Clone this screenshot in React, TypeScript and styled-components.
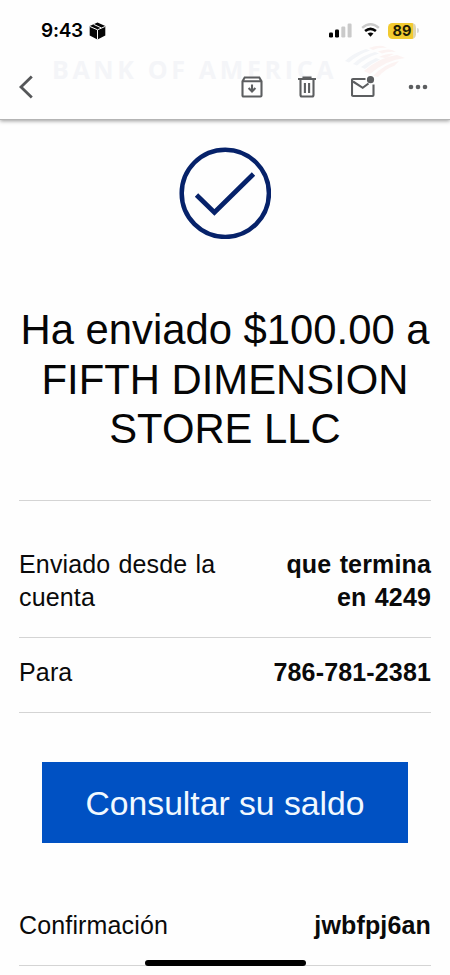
import React from "react";
import styled, { createGlobalStyle } from "styled-components";

const GlobalStyle = createGlobalStyle`
  * { box-sizing: border-box; }
  body {
    margin: 0;
    background: #fefefe;
    font-family: "Liberation Sans", Arial, sans-serif;
    color: #0a0a0a;
  }
`;

const Screen = styled.div`
  position: relative;
  width: 450px;
  height: 975px;
  overflow: hidden;
  background: #fefefe;
  display: flex;
  flex-direction: column;
`;

const Header = styled.header`
  position: relative;
  flex: none;
  height: 120px;
  border-bottom: 1px solid #b4b4b4;
  box-shadow: 0 1px 4px rgba(0, 0, 0, 0.4);
  background: #fefefe;
`;

const StatusBar = styled.div`
  height: 60px;
  display: flex;
  align-items: center;
  justify-content: space-between;
  padding: 1px 31px 0 41px;
`;

const StatusGroup = styled.div<{ $gap: number }>`
  display: flex;
  align-items: center;
  gap: ${(p) => p.$gap}px;
`;

const Clock = styled.span`
  font: 600 19px/24px Inter, sans-serif;
  letter-spacing: -0.25px;
  color: #000;
`;

const Battery = styled.div`
  display: flex;
  align-items: center;
  gap: 1px;
`;

const BatteryBody = styled.span`
  width: 28px;
  height: 16px;
  border-radius: 4.5px;
  background: linear-gradient(90deg, #f2ca30 89%, #dfd5ae 89%);
  color: #211b04;
  font: 700 14.5px/16.5px Inter, sans-serif;
  text-align: center;
`;

const BatteryTip = styled.span`
  width: 2px;
  height: 5px;
  border-radius: 0 2px 2px 0;
  background: #d8d8d8;
`;

const Toolbar = styled.nav`
  position: relative;
  height: 54px;
  display: flex;
  align-items: center;
  justify-content: space-between;
  padding: 0 20px 0 14px;
`;

const Actions = styled.div`
  display: flex;
  gap: 31.5px;
`;

const IconButton = styled.button`
  width: 24px;
  height: 28px;
  padding: 0;
  border: 0;
  background: none;
  display: flex;
  align-items: center;
  justify-content: center;
  svg { flex: none; display: block; }
`;

const Watermark = styled.div`
  position: absolute;
  left: 52px;
  top: 45px;
  display: flex;
  align-items: flex-start;
  gap: 6px;
`;

const WatermarkText = styled.span`
  width: 286px;
  padding-top: 7px;
  font: 700 25px/34px "Open Sans", sans-serif;
  letter-spacing: 3.65px;
  white-space: nowrap;
  color: #f4f5f8;
`;

const Content = styled.main`
  flex: 1;
  display: flex;
  flex-direction: column;
  padding: 27px 19px 0;
`;

const CheckMark = styled.svg`
  align-self: center;
  flex: none;
`;

const Title = styled.h1`
  margin: 66px -10px 0;
  height: 148px;
  font-size: 41.8px;
  font-weight: 400;
  line-height: 49.6px;
  text-align: center;
  color: #060606;
`;

const Details = styled.dl`
  margin: 47px 0 0;
  border-top: 1px solid #d4d4d4;
`;

const Row = styled.div<{ $height: number; $top: number }>`
  display: flex;
  justify-content: space-between;
  height: ${(p) => p.$height}px;
  padding-top: ${(p) => p.$top}px;
  border-bottom: 1px solid #d4d4d4;
  font-size: 25px;
  line-height: 33.3px;
`;

const Label = styled.dt<{ $word?: number }>`
  width: 220px;
  letter-spacing: 0.15px;
  word-spacing: ${(p) => p.$word ?? 0}px;
`;

const Value = styled.dd<{ $word?: number }>`
  margin: 0;
  width: 180px;
  font-weight: 700;
  text-align: right;
  letter-spacing: 0.15px;
  word-spacing: ${(p) => p.$word ?? 0}px;
`;

const BalanceButton = styled.button`
  flex: none;
  align-self: center;
  width: 366px;
  height: 81px;
  margin: 49px 0 42px;
  padding: 0;
  border: 0;
  background: #0051c3;
  color: #f1f9ff;
  font: 33.7px/78px "Liberation Sans", Arial, sans-serif;
`;

const Confirmation = styled.dl`
  margin: 0;
`;

const HomeIndicator = styled.div`
  position: absolute;
  left: 145px;
  bottom: 9px;
  width: 161px;
  height: 6px;
  border-radius: 3px;
  background: #000;
`;

const PackageIcon = () => (
  <svg width="17" height="18" viewBox="0 0 17 18">
    <path d="M8.5.5 16.3 4v9.5l-7.8 4-7.8-4V4z" fill="#050505" />
    <path d="M.7 4.4 8.5 7.8l7.8-3.4M8.5 8v9.5M4.6 2.3l7.6 3.6" fill="none" stroke="#fefefe" strokeWidth="1" />
  </svg>
);

const SignalIcon = () => (
  <svg width="23" height="15" viewBox="0 0 23 15">
    <rect x="0" y="9.5" width="4" height="5" rx="1.2" fill="#050505" />
    <rect x="6" y="6.5" width="4" height="8" rx="1.2" fill="#050505" />
    <rect x="12.3" y="3.5" width="4" height="11" rx="1.2" fill="#cacaca" />
    <rect x="18.6" y=".5" width="4" height="14" rx="1.2" fill="#cacaca" />
  </svg>
);

const WifiIcon = () => (
  <svg width="19" height="14.5" viewBox="0 0 20 15" fill="none">
    <path d="M1.2 5.1Q10-2.6 18.8 5.1" stroke="#cacaca" strokeWidth="2.5" />
    <path d="M4.3 8.4q5.7-4.8 11.4 0" stroke="#050505" strokeWidth="2.7" />
    <path d="M6.9 11q3.1-2.4 6.2 0L10 14.4z" fill="#050505" />
  </svg>
);

const FlagMark = () => (
  <svg width="64" height="34" viewBox="0 0 64 34">
    <path d="M1 16Q11 7 22 4l4 1.5Q15 9 5 17.500zM9 19Q19 10 31 7l4 1.500Q23 12 13 20.500zM17 22Q25 16 32 13l4 1.500Q28 18 21 24z" fill="#f3f5f8" />
    <path d="M25 3q8-3 14-2l4 2q-8-1-14 2zM34 6.500q9-3 14-1.500l4 2q-8-1-14 1.500zM20 26Q36 12 53 10l8 3Q42 15 26 29zM35 12q9-4 15-3l-9 4zM29 31Q40 19 55 16l-5 5q-9 3-16 11z" fill="#fcf3f2" />
  </svg>
);

const BackIcon = () => (
  <svg width="20" height="24" viewBox="0 0 20 24">
    <path d="M15.8 1.5 5 12l10.8 10.5" fill="none" stroke="#555759" strokeWidth="2.8" />
  </svg>
);

const ArchiveIcon = () => (
  <svg width="22" height="22" viewBox="0 0 22 22" fill="none" stroke="#5c5e60" strokeWidth="2.1">
    <path d="M1.5 5.2 3.7 1.5h14.6l2.2 3.7v14.3q0 1-1 1h-17q-1 0-1-1zM1.5 5.2h19" />
    <path d="M11 8.6v7M7.6 12.1l3.4 3.4 3.400-3.400" />
  </svg>
);

const TrashIcon = () => (
  <svg width="20" height="22" viewBox="0 0 20 22" fill="none" stroke="#5c5e60" strokeWidth="2.1">
    <path d="M1 3h18M6.500 2.100V1.500h7v.6M3.500 3.500V19q0 1.500 1.500 1.500h10q1.500 0 1.500-1.500V3.500M7.900 7v10M12.100 7v10" />
  </svg>
);

const MailIcon = () => (
  <svg width="24" height="22" viewBox="0 0 24 22" fill="none" stroke="#5c5e60" strokeWidth="2.1">
    <path d="M14.500 3H2q-1 0-1 1v15q0 1 1 1h19.500q1 0 1-1V8.500M2 5.500l9.700 6.300 5.800-4.300" />
    <circle cx="19.500" cy="3.700" r="3.600" fill="#5c5e60" stroke="none" />
  </svg>
);

const MoreIcon = () => (
  <svg width="20" height="6" viewBox="0 0 20 6" fill="#5c5e60">
    <circle cx="3" cy="3" r="2.3" />
    <circle cx="10" cy="3" r="2.3" />
    <circle cx="17" cy="3" r="2.3" />
  </svg>
);

export default function App() {
  return (
    <>
      <GlobalStyle />
      <Screen>
        <Header>
          <Watermark>
            <WatermarkText>BANK OF AMERICA</WatermarkText>
            <FlagMark />
          </Watermark>
          <StatusBar>
            <StatusGroup $gap={6}>
              <Clock>9:43</Clock>
              <PackageIcon />
            </StatusGroup>
            <StatusGroup $gap={8.5}>
              <SignalIcon />
              <WifiIcon />
              <Battery>
                <BatteryBody>89</BatteryBody>
                <BatteryTip />
              </Battery>
            </StatusGroup>
          </StatusBar>
          <Toolbar>
            <IconButton aria-label="Atrás"><BackIcon /></IconButton>
            <Actions>
              <IconButton aria-label="Archivar"><ArchiveIcon /></IconButton>
              <IconButton aria-label="Eliminar"><TrashIcon /></IconButton>
              <IconButton aria-label="Marcar como no leído"><MailIcon /></IconButton>
              <IconButton aria-label="Más"><MoreIcon /></IconButton>
            </Actions>
          </Toolbar>
        </Header>
        <Content>
          <CheckMark width="92" height="92" viewBox="0 0 92 92" fill="none" stroke="#06226a">
            <circle cx="46.3" cy="46.3" r="43.6" strokeWidth="4.5" />
            <path d="M17.5 48 35.4 65.500 74.500 27" strokeWidth="4.8" />
          </CheckMark>
          <Title>
            Ha enviado $100.00 a<br />FIFTH DIMENSION<br />STORE LLC
          </Title>
          <Details>
            <Row $height={137} $top={47}>
              <Label $word={1}>Enviado desde la<br />cuenta</Label>
              <Value $word={1.2}>que termina<br />en 4249</Value>
            </Row>
            <Row $height={75} $top={18}>
              <Label>Para</Label>
              <Value>786-781-2381</Value>
            </Row>
          </Details>
          <BalanceButton>Consultar su saldo</BalanceButton>
          <Confirmation>
            <Row $height={81} $top={24}>
              <Label>Confirmación</Label>
              <Value>jwbfpj6an</Value>
            </Row>
          </Confirmation>
        </Content>
        <HomeIndicator />
      </Screen>
    </>
  );
}
